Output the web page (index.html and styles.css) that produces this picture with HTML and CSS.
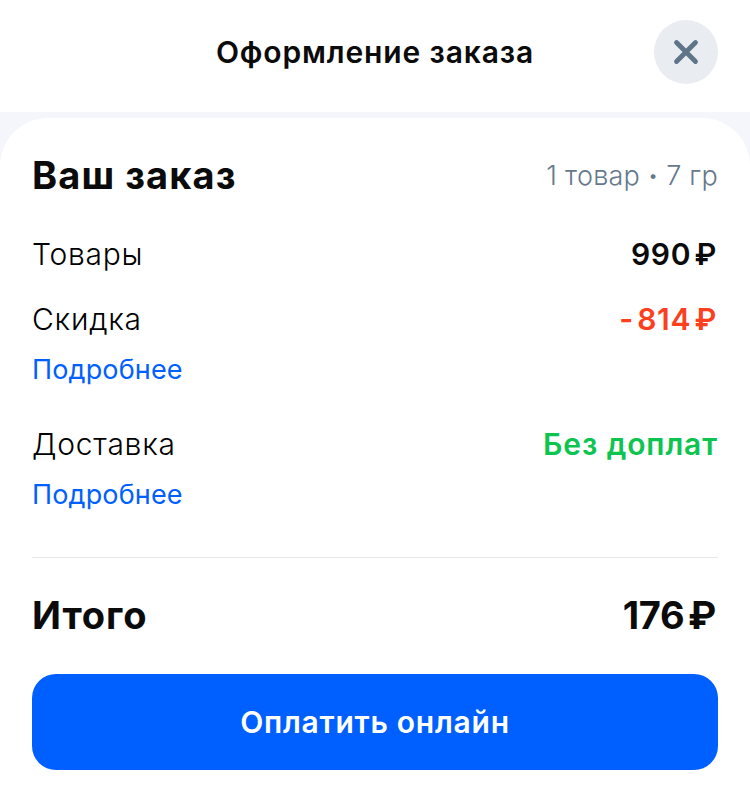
FILE: index.html
```html
<!DOCTYPE html>
<html lang="ru">
<head>
<meta charset="utf-8">
<title>Оформление заказа</title>
<link rel="stylesheet" href="styles.css">
</head>
<body>
<div class="page">
  <header class="header">
    <h1 class="header-title">Оформление заказа</h1>
    <button class="close" aria-label="Закрыть">
      <svg width="26" height="26" viewBox="0 0 26 26"><path d="M3.5 3.5L22.5 22.5M22.5 3.5L3.5 22.5" fill="none" stroke="#5f7389" stroke-width="4.8" stroke-linecap="round"/></svg>
    </button>
  </header>
  <main class="card">
    <div class="head-row">
      <h2 class="order-title">Ваш заказ</h2>
      <span class="order-meta">1 товар <span class="dot">•</span> 7 гр</span>
    </div>
    <div class="row row-goods">
      <span class="label">Товары</span>
      <span class="value">990 ₽</span>
    </div>
    <div class="row row-discount">
      <span class="label">Скидка</span>
      <span class="value red">- 814 ₽</span>
    </div>
    <a class="more" href="#">Подробнее</a>
    <div class="row row-delivery">
      <span class="label">Доставка</span>
      <span class="value green">Без доплат</span>
    </div>
    <a class="more" href="#">Подробнее</a>
    <div class="divider"></div>
    <div class="row total">
      <span class="total-label">Итого</span>
      <span class="total-value">176 ₽</span>
    </div>
    <button class="pay">Оплатить онлайн</button>
  </main>
</div>
</body>
</html>
```
FILE: styles.css
```css
* { box-sizing: border-box; }
html, body { margin: 0; padding: 0; }
body {
  font-family: Inter, "Noto Sans", sans-serif;
  color: #0b0b0b;
  background: #f4f6fb;
}
.page { width: 750px; height: 795px; display: flex; flex-direction: column; overflow: hidden; }
.header {
  height: 112px;
  flex: none;
  background: #fff;
  display: flex;
  align-items: center;
  justify-content: center;
  position: relative;
  padding-bottom: 8px;
}
.header-title { margin: 0; font-size: 30px; line-height: 36px; font-weight: 600; letter-spacing: 0.85px; }
.close {
  position: absolute;
  left: 654px;
  top: 20px;
  width: 64px;
  height: 64px;
  border: 0;
  padding: 0;
  border-radius: 50%;
  background: #e9edf2;
  display: flex;
  align-items: center;
  justify-content: center;
}
.card {
  flex: 1;
  margin-top: 6px;
  background: #fff;
  border-radius: 48px 48px 0 0;
  padding: 32px 32px 0;
  display: flex;
  flex-direction: column;
}
.head-row, .row { display: flex; justify-content: space-between; }
.head-row { align-items: center; height: 50px; }
.order-title { margin: 0; font-size: 38px; line-height: 50px; font-weight: 700; letter-spacing: 1.1px; }
.order-meta { font-size: 27px; font-weight: 300; color: #66788c; letter-spacing: 0.25px; }
.dot { font-size: 18px; vertical-align: 3px; }
.row { align-items: center; height: 36px; }
.row-goods { margin-top: 36px; }
.row-discount { margin-top: 29px; }
.row-delivery { margin-top: 38px; }
.label { font-size: 30px; line-height: 36px; font-weight: 300; letter-spacing: 0.75px; color: #000; }
.value { font-size: 30px; line-height: 36px; font-weight: 600; word-spacing: -5px; letter-spacing: 0.7px; margin-right: 1px; }
.red { color: #fc3f1d; }
.green { color: #0cc44f; letter-spacing: 0.9px; word-spacing: 0; margin-right: 0; }
.more { margin-top: 15px; font-size: 27px; line-height: 36px; font-weight: 400; color: #0060ff; text-decoration: none; letter-spacing: 0.15px; }
.divider { height: 1px; background: #e4e8ea; margin-top: 44px; }
.total { margin-top: 35px; height: 44px; }
.total-label { font-size: 38px; line-height: 44px; font-weight: 700; letter-spacing: 0.9px; }
.total-value { font-size: 38px; line-height: 44px; font-weight: 700; word-spacing: -5px; letter-spacing: -0.3px; margin-right: 2px; }
.pay {
  margin-top: 37px;
  height: 96px;
  flex: none;
  border: 0;
  border-radius: 24px;
  background: #0060ff;
  color: #fff;
  font: 600 30px/36px Inter, "Noto Sans", sans-serif;
  letter-spacing: 0.75px;
}
```
